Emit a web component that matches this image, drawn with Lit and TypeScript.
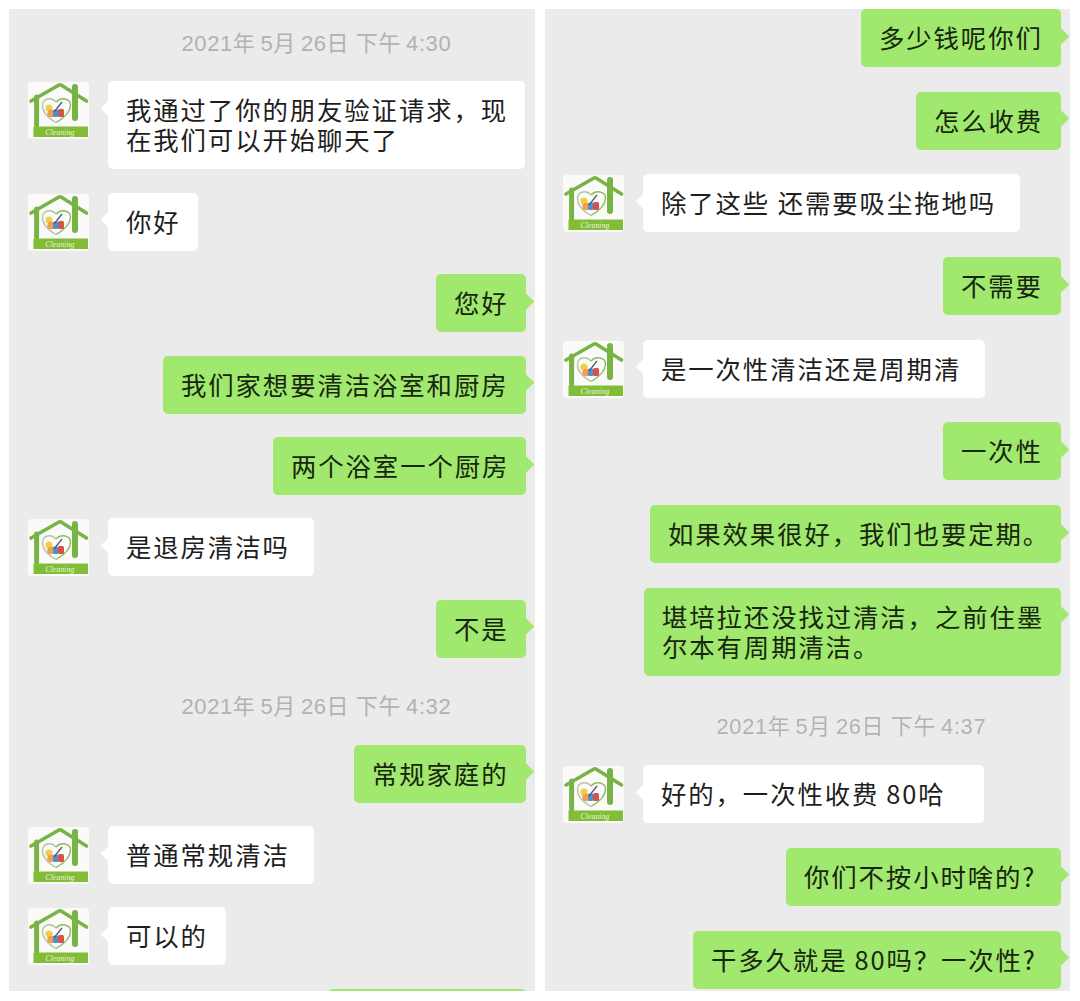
import { LitElement, html, css } from "lit";
import { customElement } from "lit/decorators.js";

type Row = { k: "in" | "out" | "time"; t: string; w?: number; wrap?: boolean };

const L: Row[] = [
  { k: "time", t: "2021年\u20095月\u200926日 下午\u20094:30" },
  { k: "in", t: "我通过了你的朋友验证请求，现在我们可以开始聊天了", w: 417, wrap: true },
  { k: "in", t: "你好", w: 90 },
  { k: "out", t: "您好", w: 90 },
  { k: "out", t: "我们家想要清洁浴室和厨房", w: 363 },
  { k: "out", t: "两个浴室一个厨房", w: 253 },
  { k: "in", t: "是退房清洁吗", w: 206 },
  { k: "out", t: "不是", w: 90 },
  { k: "time", t: "2021年\u20095月\u200926日 下午\u20094:32" },
  { k: "out", t: "常规家庭的", w: 172 },
  { k: "in", t: "普通常规清洁", w: 206 },
  { k: "in", t: "可以的", w: 118 },
  { k: "out", t: "", w: 198 },
];

const R: Row[] = [
  { k: "out", t: "多少钱呢你们", w: 200 },
  { k: "out", t: "怎么收费", w: 145 },
  { k: "in", t: "除了这些 还需要吸尘拖地吗", w: 377 },
  { k: "out", t: "不需要", w: 118 },
  { k: "in", t: "是一次性清洁还是周期清", w: 342 },
  { k: "out", t: "一次性", w: 118 },
  { k: "out", t: "如果效果很好，我们也要定期。", w: 411 },
  { k: "out", t: "堪培拉还没找过清洁，之前住墨尔本有周期清洁。", w: 417, wrap: true },
  { k: "time", t: "2021年\u20095月\u200926日 下午\u20094:37" },
  { k: "in", t: "好的，一次性收费\u200980哈", w: 341 },
  { k: "out", t: "你们不按小时啥的?", w: 275 },
  { k: "out", t: "干多久就是\u200980吗？一次性?", w: 368 },
];

@customElement("app-root")
export class AppRoot extends LitElement {
  static styles = css`
    :host {
      display: block;
      width: 1080px;
      height: 1001px;
      background: #fff;
      font-family: "Noto Sans CJK SC", "Liberation Sans", sans-serif;
    }
    .page {
      display: grid;
      grid-template-columns: 526px 525px;
      column-gap: 10px;
      padding: 9px 0 0 9px;
      filter: blur(0.45px);
    }
    .panel {
      height: 982px;
      overflow: hidden;
      background: #ebebeb;
      padding: 0 9px 0 18px;
      box-sizing: border-box;
      display: flex;
      flex-direction: column;
      gap: 24.7px;
    }
    .panel.left {
      padding: 9.1px 9px 0 19px;
      gap: 23.4px;
    }
    .time {
      flex: none;
      height: 40px;
      padding: 12px 0 0 153.5px;
      box-sizing: border-box;
      color: #b2b2b2;
      font-family: "Liberation Sans", "Noto Sans CJK SC", sans-serif;
      font-size: 22px;
      line-height: 28px;
      letter-spacing: 0.6px;
      white-space: nowrap;
    }
    .row {
      flex: none;
      display: flex;
      align-items: flex-start;
      gap: 19px;
    }
    .row.out {
      justify-content: flex-end;
    }
    .avatar {
      flex: none;
      width: 61px;
      height: 57px;
      margin-top: 1px;
      display: block;
    }
    .bubble {
      position: relative;
      box-sizing: border-box;
      min-height: 58px;
      padding: 13px 18px 15px;
      border-radius: 5px;
      font-size: 25.4px;
      line-height: 30px;
      letter-spacing: 1.9px;
      color: #1e1e1e;
      white-space: nowrap;
    }
    .bubble.wrap {
      padding-right: 10px;
      white-space: normal;
    }
    .in .bubble {
      background: #fff;
    }
    .out .bubble {
      background: #a0e96e;
      color: #18260f;
    }
    .bubble::after {
      content: "";
      position: absolute;
      top: 21.5px;
      width: 11px;
      height: 11px;
      background: inherit;
      transform: rotate(45deg);
    }
    .in .bubble::after {
      left: -5.5px;
    }
    .out .bubble::after {
      right: -5.5px;
    }
  `;

  private logo() {
    return html`<svg class="avatar" viewBox="0 0 61 57">
      <rect width="61" height="57" rx="4" fill="#fafbf9" />
      <g fill="none" stroke="#78b345" stroke-linecap="round">
        <path d="M3 19 L31 3" stroke-width="3.6" />
        <path d="M33 3 L58.5 19" stroke-width="3.6" />
        <path d="M8.6 15 V43" stroke-width="5" />
        <path d="M47 5 V36" stroke-width="6" />
      </g>
      <path d="M28 40.5 C20 36 14 30 14.5 23 C15 16.5 23 14.5 28 20" fill="none" stroke="#b5c4a4" stroke-width="1.3" />
      <path d="M28 40.5 C36 36 42.5 30 42.5 23 C42.5 16.5 33 14.5 28 20" fill="none" stroke="#8dbb62" stroke-width="1.4" />
      <circle cx="21" cy="26" r="3.6" fill="#f2cd4a" />
      <circle cx="23" cy="31.5" r="3.8" fill="#ee9f4f" />
      <rect x="25" y="27.5" width="5.5" height="7.5" rx="1.5" fill="#4f8fd0" />
      <rect x="30" y="27" width="6" height="8" rx="1.5" fill="#d4524c" />
      <path d="M26 30 L34 20" stroke="#4f5f72" stroke-width="1.3" />
      <rect x="5.5" y="44.5" width="54.5" height="10.5" fill="#82bd38" />
      <text x="32" y="52.8" text-anchor="middle" fill="#eef6df" font-family="Liberation Serif, serif" font-style="italic" font-size="7.5" letter-spacing="0.2">Cleaning</text>
    </svg>`;
  }

  private row(r: Row) {
    if (r.k === "time") {
      return html`<div class="time">${r.t}</div>`;
    }
    return html`<div class="row ${r.k}">
      ${r.k === "in" ? this.logo() : ""}
      <div class="bubble ${r.wrap ? "wrap" : ""}" style="width:${r.w}px">${r.t}</div>
    </div>`;
  }

  render() {
    return html`<div class="page">
      <div class="panel left">${L.map((r) => this.row(r))}</div>
      <div class="panel">${R.map((r) => this.row(r))}</div>
    </div>`;
  }
}
